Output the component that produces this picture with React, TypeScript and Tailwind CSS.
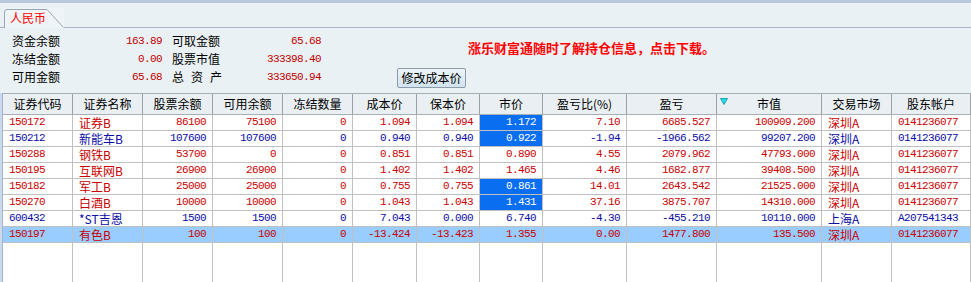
import React from "react";

type Row = {
  code: string;
  name: string;
  qty: string;
  avail: string;
  frozen: string;
  cost: string;
  breakEven: string;
  price: string;
  hl?: boolean;
  ratio: string;
  pnl: string;
  value: string;
  market: string;
  account: string;
  blue?: boolean;
  selected?: boolean;
};

const rows: Row[] = [
  { code: "150172", name: "证券B", qty: "86100", avail: "75100", frozen: "0", cost: "1.094", breakEven: "1.094", price: "1.172", hl: true, ratio: "7.10", pnl: "6685.527", value: "100909.200", market: "深圳A", account: "0141236077" },
  { code: "150212", name: "新能车B", qty: "107600", avail: "107600", frozen: "0", cost: "0.940", breakEven: "0.940", price: "0.922", hl: true, ratio: "-1.94", pnl: "-1966.562", value: "99207.200", market: "深圳A", account: "0141236077", blue: true },
  { code: "150288", name: "钢铁B", qty: "53700", avail: "0", frozen: "0", cost: "0.851", breakEven: "0.851", price: "0.890", ratio: "4.55", pnl: "2079.962", value: "47793.000", market: "深圳A", account: "0141236077" },
  { code: "150195", name: "互联网B", qty: "26900", avail: "26900", frozen: "0", cost: "1.402", breakEven: "1.402", price: "1.465", ratio: "4.46", pnl: "1682.877", value: "39408.500", market: "深圳A", account: "0141236077" },
  { code: "150182", name: "军工B", qty: "25000", avail: "25000", frozen: "0", cost: "0.755", breakEven: "0.755", price: "0.861", hl: true, ratio: "14.01", pnl: "2643.542", value: "21525.000", market: "深圳A", account: "0141236077" },
  { code: "150270", name: "白酒B", qty: "10000", avail: "10000", frozen: "0", cost: "1.043", breakEven: "1.043", price: "1.431", hl: true, ratio: "37.16", pnl: "3875.707", value: "14310.000", market: "深圳A", account: "0141236077" },
  { code: "600432", name: "*ST吉恩", qty: "1500", avail: "1500", frozen: "0", cost: "7.043", breakEven: "0.000", price: "6.740", ratio: "-4.30", pnl: "-455.210", value: "10110.000", market: "上海A", account: "A207541343", blue: true },
  { code: "150197", name: "有色B", qty: "100", avail: "100", frozen: "0", cost: "-13.424", breakEven: "-13.423", price: "1.355", ratio: "0.00", pnl: "1477.800", value: "135.500", market: "深圳A", account: "0141236077", selected: true },
];

const headers = ["证券代码", "证券名称", "股票余额", "可用余额", "冻结数量", "成本价", "保本价", "市价", "盈亏比(%)", "盈亏", "市值", "交易市场", "股东帐户"];

const cols = "grid grid-cols-[70px_70px_70px_70px_70px_64px_63px_63px_84px_90px_105px_70px_1fr]";
const num = "font-['Liberation_Mono',monospace] text-[11px] tracking-[-0.6px]";
const cjk = "font-['Noto_Sans_CJK_SC',sans-serif] text-[12px]";

const App = () => {
  return (
    <div className="w-[971px] h-[282px] overflow-hidden flex flex-col bg-[#eaf1f5] font-['Noto_Sans_CJK_SC',sans-serif] text-[12px] text-black">
      <div className="h-[3px] bg-[#b9c9dc]" />

      {/* 标签 */}
      <div className="h-[25px] flex items-end pl-[4px] border-b border-[#a9b5c1]">
        <div className="relative w-[60px] h-[20px] mb-[-1px] bg-[#eef4f7]">
          <svg className="absolute inset-0" width="60" height="20" viewBox="0 0 60 20">
            <path d="M0.5 20 V4 Q0.5 1.5 3 1.5 H43 L59.5 19.5" fill="none" stroke="#9aa6b2" />
          </svg>
          <span className="relative block pl-[6px] pt-[2px] leading-[16px] text-[#ff0000]">人民币</span>
        </div>
      </div>

      {/* 资金信息 */}
      <div className="h-[65px] flex">
        <div className="grid grid-cols-[60px_90px_10px_60px_89px] pl-[12px] pt-[4px] leading-[18px] auto-rows-[18px]">
          <span>资金余额</span>
          <span className={`text-right text-[#c00000] ${num}`}>163.89</span>
          <span />
          <span>可取金额</span>
          <span className={`text-right text-[#c00000] ${num}`}>65.68</span>
          <span>冻结金额</span>
          <span className={`text-right text-[#c00000] ${num}`}>0.00</span>
          <span />
          <span>股票市值</span>
          <span className={`text-right text-[#c00000] ${num}`}>333398.40</span>
          <span>可用金额</span>
          <span className={`text-right text-[#c00000] ${num}`}>65.68</span>
          <span />
          <span className="flex gap-[7px]">
            <span>总</span>
            <span>资</span>
            <span>产</span>
          </span>
          <span className={`text-right text-[#c00000] ${num}`}>333650.94</span>
        </div>
        <div className="flex flex-col items-start ml-[76px]">
          <p className="ml-[71px] mt-[12px] leading-[16px] text-[13px] font-bold text-[#ff0000]">
            涨乐财富通随时了解持仓信息，点击下载。
          </p>
          <button className="mt-[12px] w-[69px] h-[20px] border border-[#8d9ba8] rounded-[2px] bg-gradient-to-b from-[#eef5fa] to-[#cfe3f0] text-[12px] leading-[18px] text-black">
            修改成本价
          </button>
        </div>
      </div>

      {/* 持仓表格 */}
      <div className="flex-1 flex">
        <div className="w-[3px] bg-[#cbd9ee] border-r border-[#a4b4ca]" />
        <div className="flex-1 flex flex-col bg-white">
          <div className={`${cols} h-[22px] bg-[#e9eff3] border-t border-b border-[#a7afb7]`}>
            {headers.map((h, i) => (
              <div key={h} className="relative border-r border-[#a0a0a0] text-center leading-[20px]">
                {i === 10 && (
                  <svg className="absolute left-[3px] top-[4px]" width="8" height="7" viewBox="0 0 8 7">
                    <path d="M0.5 0.5 H7.5 L4 6.5 Z" fill="#19e3ea" stroke="#0a8ca0" strokeWidth="0.8" />
                  </svg>
                )}
                {h}
              </div>
            ))}
          </div>

          {rows.map((r) => {
            const color = r.blue ? "text-[#0b0ba6]" : "text-[#c80000]";
            const cell = "border-r border-[#c0c0c0] px-[6px] leading-[15px] whitespace-nowrap overflow-hidden";
            return (
              <div
                key={r.code}
                className={`${cols} h-[16px] border-b border-[#c0c0c0] ${r.selected ? "bg-[#99ccff]" : "bg-white"} ${color}`}
              >
                <div className={`${cell} ${num}`}>{r.code}</div>
                <div className={`${cell} ${cjk}`}>{r.name}</div>
                <div className={`${cell} text-right ${num}`}>{r.qty}</div>
                <div className={`${cell} text-right ${num}`}>{r.avail}</div>
                <div className={`${cell} text-right ${num}`}>{r.frozen}</div>
                <div className={`${cell} text-right ${num}`}>{r.cost}</div>
                <div className={`${cell} text-right ${num}`}>{r.breakEven}</div>
                <div className={`${cell} text-right ${num} ${r.hl ? "bg-[#0a6ef0] text-white" : ""}`}>{r.price}</div>
                <div className={`${cell} text-right ${num}`}>{r.ratio}</div>
                <div className={`${cell} text-right ${num}`}>{r.pnl}</div>
                <div className={`${cell} text-right ${num}`}>{r.value}</div>
                <div className={`${cell} ${cjk}`}>{r.market}</div>
                <div className={`${cell} ${num}`}>{r.account}</div>
              </div>
            );
          })}

          <div className={`${cols} flex-1`}>
            {headers.map((h) => (
              <div key={h} className="border-r border-[#c0c0c0]" />
            ))}
          </div>
        </div>
      </div>
    </div>
  );
};

export default App;
